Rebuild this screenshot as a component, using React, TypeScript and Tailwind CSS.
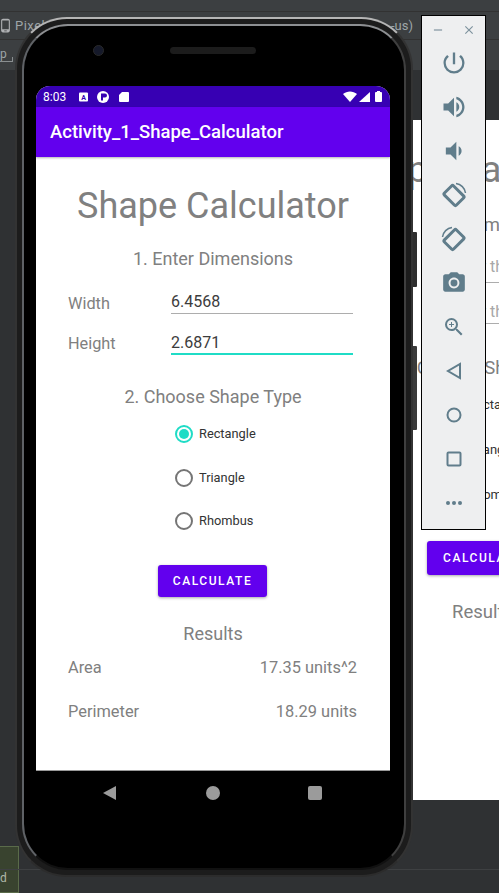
import { MdPowerSettingsNew, MdVolumeUp, MdVolumeDown, MdPhotoCamera, MdZoomIn, MdClose, MdRemove, MdPhoneAndroid } from "react-icons/md";

const RotateIcon = ({ flip }: { flip?: boolean }) => (
  <svg width="26" height="26" viewBox="0 0 26 26" fill="none" stroke="#607d8b" className={flip ? "-scale-x-100" : ""}>
    <rect x="6.5" y="5" width="13" height="17" rx="1.5" strokeWidth="3" transform="rotate(-45 13 13.5)" />
    <path d="M15 1.5 A 11 11 0 0 1 24.5 11" strokeWidth="1.5" />
  </svg>
);

const Radio = ({ label, checked }: { label: string; checked?: boolean }) => (
  <div className="flex items-center h-[18px]">
    <div className={`w-[18px] h-[18px] rounded-full border-2 flex items-center justify-center ${checked ? "border-[#1fdcc6]" : "border-[#757575]"}`}>
      {checked && <div className="w-[10px] h-[10px] rounded-full bg-[#1fdcc6]" />}
    </div>
    <span className="ml-[6px] text-[12.8px] text-[#333]">{label}</span>
  </div>
);

const Phone = () => (
  <div className="absolute left-[15px] top-[17px] w-[398px] h-[860px] rounded-[52px] bg-[#1c1c1c] border-2 border-t-[#b5b5b5] border-x-[#333] border-b-[#2c2c2c] overflow-hidden">
    <div className="absolute inset-[5px] rounded-[46px] bg-black border-2 border-t-[#8d8f92] border-l-[#5f6266] border-r-[#3f3f3f] border-b-[#111]" />
    <div className="absolute left-[76px] top-[26px] w-[11px] h-[11px] rounded-full bg-[#15192a] border border-[#2a2a2a]" />
    <div className="absolute left-[153px] top-[28px] w-[86px] h-[7px] rounded-full bg-[#1c1c1c]" />
    <div className="absolute left-[19px] top-[67px] w-[354px] h-[685px] bg-white rounded-t-[14px] overflow-hidden flex flex-col font-['Roboto',sans-serif]">
      <div className="h-[21px] bg-[#3700b3] flex items-center pl-[7px] pr-[7px] text-white">
        <span className="text-[12px] w-[36px]">8:03</span>
        <svg width="52" height="12" viewBox="0 0 52 12" fill="white">
          <rect x="0" y="1.5" width="9" height="9" rx="1" />
          <text x="2.2" y="9" fontSize="7" fontWeight="700" fill="#3700b3">A</text>
          <circle cx="24" cy="6" r="6" />
          <path d="M22 2.5h4a2 2 0 0 1 0 4h-2v3h-2z" fill="#3700b3" />
          <path d="M43 1h6a1 1 0 0 1 1 1v8a1 1 0 0 1-1 1h-8a1 1 0 0 1-1-1V4z" />
        </svg>
        <div className="flex-1" />
        <svg width="40" height="12" viewBox="0 0 40 12" fill="white">
          <path d="M0 3 C4 -0.5 10 -0.5 14 3 L7 11z" />
          <path d="M27 1v10H16z" />
          <rect x="32" y="1" width="7" height="10" rx="1" />
          <rect x="34" y="0" width="3" height="1" />
        </svg>
      </div>
      <div className="h-[50px] bg-[#6200ee] flex items-center pl-[14px] pt-[2px] text-white text-[18.5px] font-medium shadow-[0_1px_2px_rgba(0,0,0,0.3)] z-10">
        Activity_1_Shape_Calculator
      </div>
      <div className="flex-1 flex flex-col text-[#808080]">
        <h1 className="text-[36px] leading-[42px] text-center mt-[28px]">Shape Calculator</h1>
        <h2 className="text-[18px] leading-[22px] text-center mt-[21px]">1. Enter Dimensions</h2>
        <div className="flex items-end mt-[4px] h-[40px] pl-[32px]">
          <span className="w-[103px] text-[16.3px] leading-[20px]">Width</span>
          <div className="w-[182px] border-b border-[#adadad] text-[16px] leading-[20px] pb-[1px] text-[#3c3c3c]">6.4568</div>
        </div>
        <div className="flex items-end h-[41px] pl-[32px]">
          <span className="w-[103px] text-[16.3px] leading-[20px] pb-[1px]">Height</span>
          <div className="w-[182px] border-b-2 border-[#1fdcc6] text-[16px] leading-[20px] text-[#3c3c3c]">2.6871</div>
        </div>
        <h2 className="text-[18px] leading-[22px] text-center mt-[31px]">2. Choose Shape Type</h2>
        <div className="flex flex-col gap-[25.5px] mt-[17px] pl-[139px]">
          <Radio label="Rectangle" checked />
          <Radio label="Triangle" />
          <Radio label="Rhombus" />
        </div>
        <div className="flex justify-center mt-[35px] pr-[1px]">
          <button className="w-[109px] h-[32px] rounded-[3px] bg-[#6200ee] text-white text-[12px] font-medium tracking-[1.55px] shadow-[0_1px_3px_rgba(0,0,0,0.35)]">CALCULATE</button>
        </div>
        <h2 className="text-[18px] leading-[22px] text-center mt-[26px]">Results</h2>
        <div className="flex justify-between text-[16.4px] pl-[32px] pr-[33px] mt-[11px] h-[44px]">
          <span>Area</span>
          <span>17.35 units^2</span>
        </div>
        <div className="flex justify-between text-[16.4px] pl-[32px] pr-[33px]">
          <span>Perimeter</span>
          <span>18.29 units</span>
        </div>
      </div>
    </div>
    <div className="absolute left-[19px] top-[751px] w-[354px] h-[1px] bg-[#999]" />
    <svg className="absolute left-[86px] top-[766px]" width="240" height="16" viewBox="0 0 240 16" fill="#9b9b9b">
      <path d="M0 8 L13 1 V15z" />
      <circle cx="110" cy="8" r="7" />
      <rect x="205" y="1" width="14" height="14" rx="2" />
    </svg>
  </div>
);

const Toolbar = () => (
  <div className="absolute left-[421px] top-[15px] w-[65px] h-[515px] bg-[#eeeff0] border border-black flex flex-col items-center text-[#607d8b]">
    <div className="flex w-full justify-between px-[9px] mt-[7px] text-[#7d929d]">
      <MdRemove size={14} />
      <MdClose size={14} />
    </div>
    <div className="flex flex-col items-center mt-[4px]">
      <div className="h-[44px] flex items-center"><MdPowerSettingsNew size={28} /></div>
      <div className="h-[44px] flex items-center"><MdVolumeUp size={28} /></div>
      <div className="h-[44px] flex items-center"><MdVolumeDown size={28} /></div>
      <div className="h-[44px] flex items-center"><RotateIcon /></div>
      <div className="h-[44px] flex items-center"><RotateIcon flip /></div>
      <div className="h-[44px] flex items-center"><MdPhotoCamera size={26} /></div>
      <div className="h-[44px] flex items-center"><MdZoomIn size={24} /></div>
      <div className="h-[44px] flex items-center">
        <svg width="18" height="18" viewBox="0 0 18 18" fill="none" stroke="#607d8b" strokeWidth="2"><path d="M15 2 V16 L3 9z" /></svg>
      </div>
      <div className="h-[44px] flex items-center">
        <svg width="18" height="18" viewBox="0 0 18 18" fill="none" stroke="#607d8b" strokeWidth="2"><circle cx="9" cy="9" r="6.5" /></svg>
      </div>
      <div className="h-[44px] flex items-center">
        <svg width="18" height="18" viewBox="0 0 18 18" fill="none" stroke="#607d8b" strokeWidth="2"><rect x="2.5" y="2.5" width="13" height="13" rx="1" /></svg>
      </div>
      <div className="h-[44px] flex items-center gap-[2px]">
        <span className="w-[4px] h-[4px] rounded-full bg-[#607d8b]" />
        <span className="w-[4px] h-[4px] rounded-full bg-[#607d8b]" />
        <span className="w-[4px] h-[4px] rounded-full bg-[#607d8b]" />
      </div>
    </div>
  </div>
);

// second emulator window sitting behind the phone, only slices of it show
const BackWindow = () => (
  <div className="absolute left-[413px] top-[120px] w-[86px] h-[680px] bg-white overflow-hidden font-['Roboto',sans-serif] text-[#808080] whitespace-nowrap">
    <span className="absolute left-[-68px] top-[29px] text-[37px] leading-[42px]">Shape Calculator</span>
    <span className="absolute left-[54px] top-[94px] text-[18.5px] leading-[22px]">Dimensions</span>
    <span className="absolute left-[36px] top-[137px] text-[16px] leading-[20px] text-[#a8a8a8]">Enter the width</span>
    <div className="absolute left-[30px] top-[162px] w-[56px] h-[1px] bg-[#adadad]" />
    <span className="absolute left-[36px] top-[182px] text-[16px] leading-[20px] text-[#a8a8a8]">Enter the height</span>
    <div className="absolute left-[30px] top-[203px] w-[56px] h-[1px] bg-[#adadad]" />
    <span className="absolute left-[-16px] top-[237px] text-[18.5px] leading-[22px]">2. Choose Shape Type</span>
    <span className="absolute left-[55px] top-[277px] text-[13px] leading-[16px] text-[#333]">Rectangle</span>
    <span className="absolute left-[55px] top-[322px] text-[13px] leading-[16px] text-[#333]">Triangle</span>
    <span className="absolute left-[55px] top-[367px] text-[13px] leading-[16px] text-[#333]">Rhombus</span>
    <div className="absolute left-[14px] top-[421px] w-[112px] h-[34px] rounded-[3px] bg-[#6200ee] text-white text-[12px] font-medium tracking-[1.55px] pl-[16px] leading-[34px] shadow-[0_1px_3px_rgba(0,0,0,0.35)]">CALCULATE</div>
    <span className="absolute left-[39px] top-[481px] text-[18.5px] leading-[22px]">Results</span>
  </div>
);

export default function App() {
  return (
    <div className="relative w-[499px] h-[893px] overflow-hidden bg-[#2f3133] font-['Roboto',sans-serif]">
      <div className="h-[12px] bg-[#3c3f41] border-b border-[#323232]" />
      <div className="h-[28px] bg-[#3c3f41] border-b border-[#323232] flex items-center text-[#9ea5a8] text-[13px]">
        <MdPhoneAndroid size={15} className="text-[#afb1b3] -ml-[2px]" />
        <span className="ml-[2px] tracking-[0.5px]">Pixel</span>
        <span className="ml-auto mr-[86px]">-us)</span>
      </div>
      <div className="relative h-[30px] bg-[#3c3f41] text-[#9ea5a8] text-[12px] leading-[28px]">
        p
        <div className="absolute left-0 top-[17px] w-[13px] h-[5px] border-b border-r border-[#8a8f91]" />
      </div>
      <BackWindow />
      <div className="absolute left-0 top-[846px] w-[19px] h-[47px] bg-[#39432f] border border-[#5a6b4a] border-l-0 text-[#b0b8a8] text-[12px] leading-[62px] overflow-hidden">d</div>
      <div className="absolute left-0 right-0 top-[869px] h-[1px] bg-[#3e4042]" />
      {/* side buttons poke out past the phone's right edge */}
      <div className="absolute left-[412px] top-[232px] w-[5px] h-[55px] rounded-r-[1px] bg-[#2e2e2e]" />
      <div className="absolute left-[412px] top-[346px] w-[5px] h-[84px] rounded-r-[1px] bg-[#3a3a3a]" />
      <Phone />
      <Toolbar />
    </div>
  );
}
